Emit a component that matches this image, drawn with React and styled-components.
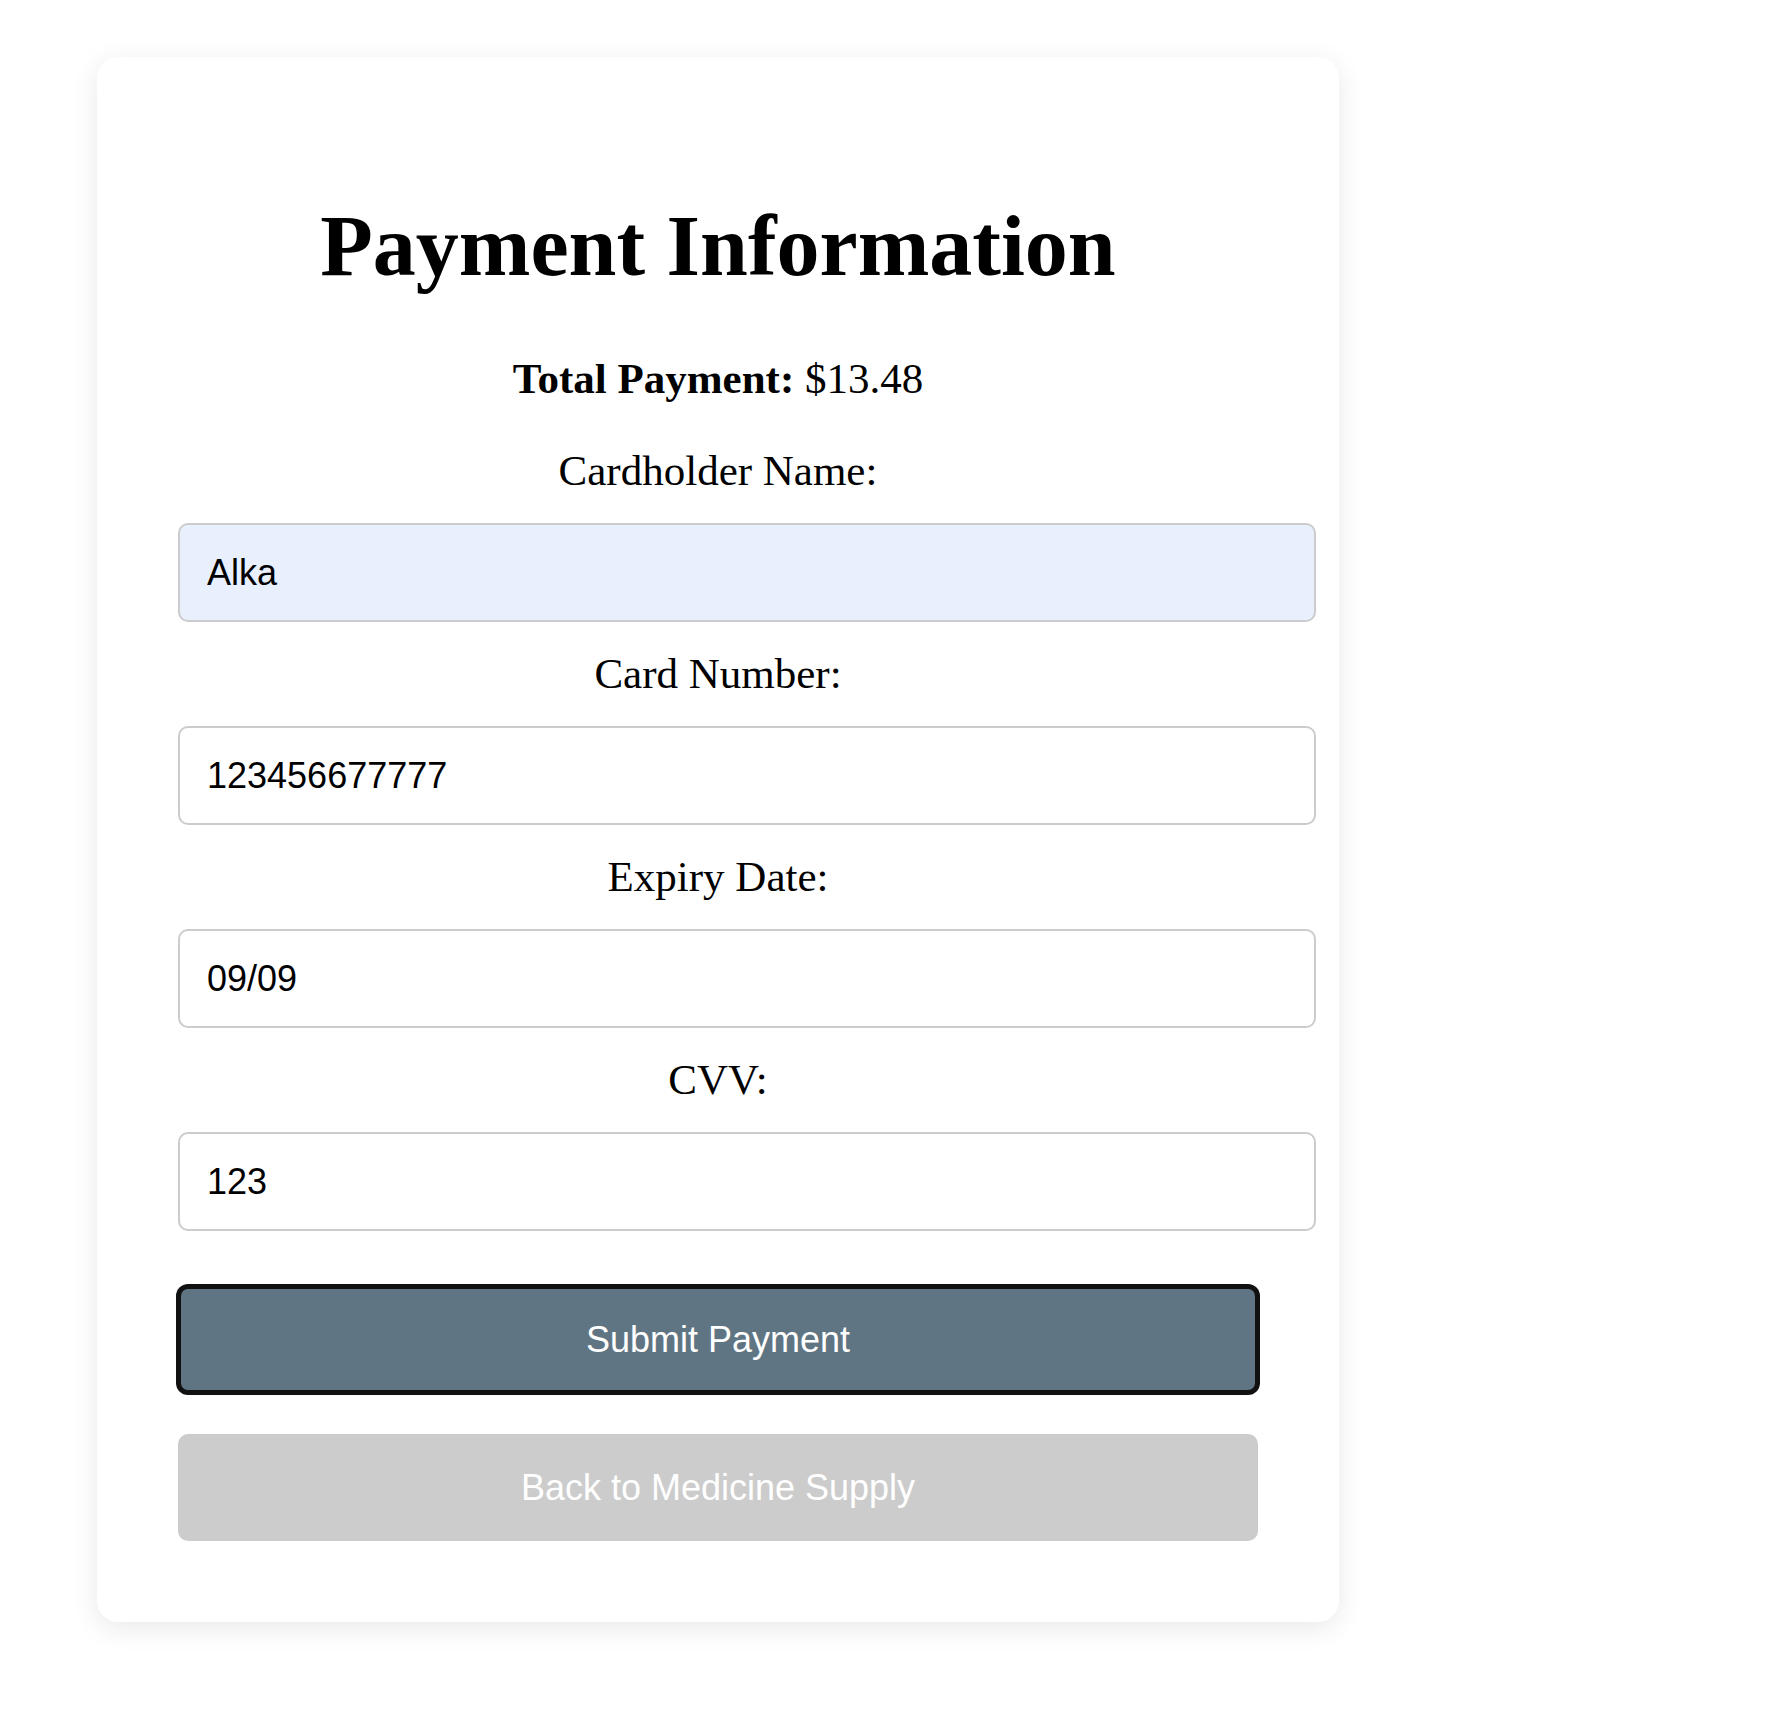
import React from "react";
import styled, { createGlobalStyle } from "styled-components";

const GlobalStyle = createGlobalStyle`
    body {
        margin: 0;
        background: #fff;
        font-family: "Liberation Serif", "Times New Roman", serif;
        color: #000;
    }
`;

const Page = styled.div`
    padding: 57px 0 96px 97px;
`;

const Card = styled.div`
    width: 1242px;
    box-sizing: border-box;
    padding: 81px;
    background: #fff;
    border-radius: 21px;
    box-shadow: 0 6px 28px rgba(0, 0, 0, 0.09);
    text-align: center;
`;

const Title = styled.h1`
    font-size: 86px;
    font-weight: bold;
    margin: 58px 0;
`;

const Total = styled.p`
    font-size: 43px;
    margin: 0 0 43px;
`;

const Form = styled.form`
    display: flex;
    flex-direction: column;
`;

const Label = styled.label`
    display: block;
    font-size: 43px;
    margin-bottom: 28px;
`;

const Input = styled.input`
    display: block;
    width: 1138px;
    height: 99px;
    box-sizing: border-box;
    padding: 0 27px;
    margin-bottom: 27px;
    border: 2px solid #cccccc;
    border-radius: 10px;
    background: ${(p) => (p.$filled ? "#e8f0fe" : "#fff")};
    font-family: "Liberation Sans", Arial, sans-serif;
    font-size: 36px;
    color: #000;
    outline: none;
`;

const Button = styled.button`
    display: block;
    width: 100%;
    height: 107px;
    box-sizing: border-box;
    border-radius: 10px;
    font-family: "Liberation Sans", Arial, sans-serif;
    font-size: 36px;
    color: #fff;
    cursor: pointer;
    background: ${(p) => (p.$muted ? "#cccccc" : "#607583")};
    border: ${(p) => (p.$muted ? "none" : "3px solid #111")};
    box-shadow: ${(p) => (p.$muted ? "none" : "0 0 0 2px #111")};
    margin-top: ${(p) => (p.$muted ? "41px" : "28px")};
`;

const fields = [
    { label: "Cardholder Name:", value: "Alka", filled: true },
    { label: "Card Number:", value: "123456677777" },
    { label: "Expiry Date:", value: "09/09" },
    { label: "CVV:", value: "123" },
];

export default function App() {
    return (
        <>
            <GlobalStyle />
            <Page>
                <Card>
                    <Title>Payment Information</Title>
                    <Total>
                        <strong>Total Payment:</strong> $13.48
                    </Total>
                    <Form onSubmit={(e) => e.preventDefault()}>
                        {fields.map((f) => (
                            <React.Fragment key={f.label}>
                                <Label>{f.label}</Label>
                                <Input defaultValue={f.value} $filled={f.filled} />
                            </React.Fragment>
                        ))}
                        <Button type="submit">Submit Payment</Button>
                        <Button type="button" $muted>Back to Medicine Supply</Button>
                    </Form>
                </Card>
            </Page>
        </>
    );
}
